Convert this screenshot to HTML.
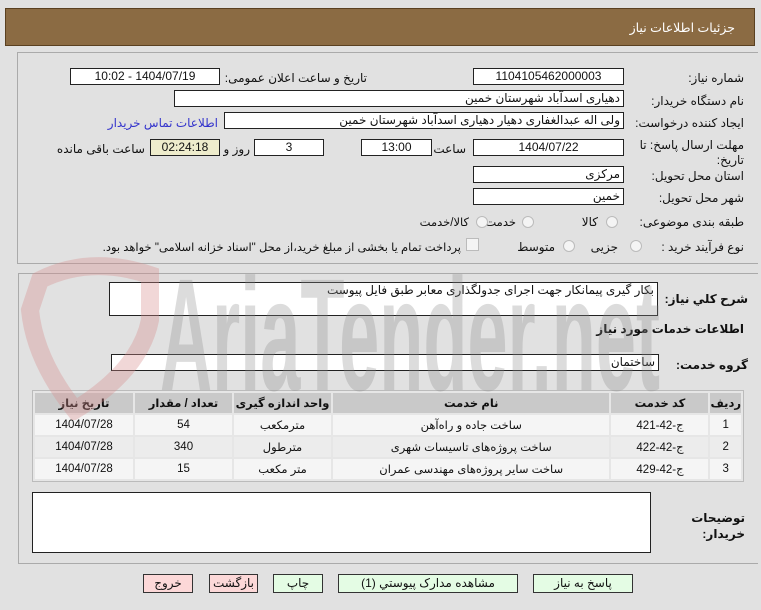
<!DOCTYPE html>
<html><head><meta charset="utf-8"><style>
body{margin:0;width:761px;height:610px;background:#e1e1e1;font-family:"Liberation Sans","DejaVu Sans",sans-serif;font-size:12px;color:#111;position:relative;overflow:hidden}
.a{position:absolute}
.in{position:absolute;background:#fff;border:1px solid #222;height:17px;box-sizing:border-box;line-height:15px;direction:rtl;padding:0 3px;white-space:nowrap;overflow:hidden}
.c{text-align:center}
.l{position:absolute;direction:rtl;white-space:nowrap}
.r{position:absolute;width:12px;height:12px;border-radius:50%;border:1px solid #bbb;background:#f4f4f4;box-sizing:border-box}
.btn{position:absolute;top:574px;height:19px;border:1px solid #333;box-sizing:border-box;text-align:center;line-height:17px;direction:rtl}
table{border-collapse:separate;border-spacing:2px;position:absolute;left:32px;top:390px;width:712px;background:#e6e6e6;border:1px solid #bbb;direction:rtl;font-size:11.5px}
td,th{text-align:center;height:20px;padding:0}
th{background:#c9c9c9;font-weight:bold}
tr.o td{background:#f5f5f5}tr.e td{background:#ececec}
</style></head><body>
<div class="a" style="left:5px;top:8px;width:750px;height:38px;background:#8b6b43;border:1px solid #5a4020;box-sizing:border-box"></div>
<div class="l" style="right:26px;top:20px;color:#fff;font-size:12.5px">جزئیات اطلاعات نیاز</div>
<div class="a" style="left:17px;top:52px;width:741px;height:212px;border:1px solid #aaa;border-right:none;box-sizing:border-box"></div>

<div class="l" style="right:17px;top:71px">شماره نیاز:</div>
<div class="in c" style="left:473px;top:68px;width:151px">1104105462000003</div>
<div class="l" style="right:394px;top:71px">تاریخ و ساعت اعلان عمومی:</div>
<div class="in c" style="left:70px;top:68px;width:150px">1404/07/19 - 10:02</div>
<div class="l" style="right:17px;top:94px">نام دستگاه خریدار:</div>
<div class="in" style="left:174px;top:90px;width:450px">دهیاری اسدآباد شهرستان خمین</div>
<div class="l" style="right:17px;top:116px">ایجاد کننده درخواست:</div>
<div class="in" style="left:224px;top:112px;width:400px">ولی اله عبدالغفاری دهیار دهیاری اسدآباد شهرستان خمین</div>
<div class="l" style="right:543px;top:116px;color:#3333cc">اطلاعات تماس خریدار</div>
<div class="l" style="right:17px;top:138px;line-height:15px;text-align:right">مهلت ارسال پاسخ: تا<br>تاریخ:</div>
<div class="in c" style="left:473px;top:139px;width:151px">1404/07/22</div>
<div class="l" style="right:295px;top:142px">ساعت</div>
<div class="in c" style="left:361px;top:139px;width:71px">13:00</div>
<div class="in c" style="left:254px;top:139px;width:70px">3</div>
<div class="l" style="right:511px;top:142px">روز و</div>
<div class="in c" style="left:150px;top:139px;width:70px;background:#eeeccc">02:24:18</div>
<div class="l" style="right:616px;top:142px">ساعت باقی مانده</div>
<div class="l" style="right:17px;top:169px">استان محل تحویل:</div>
<div class="in" style="left:473px;top:166px;width:151px">مرکزی</div>
<div class="l" style="right:17px;top:191px">شهر محل تحویل:</div>
<div class="in" style="left:473px;top:188px;width:151px">خمین</div>
<div class="l" style="right:17px;top:215px">طبقه بندی موضوعی:</div>
<div class="r" style="left:606px;top:216px"></div><div class="l" style="right:163px;top:215px">کالا</div>
<div class="r" style="left:522px;top:216px"></div><div class="l" style="right:245px;top:215px;font-size:11.5px">خدمت</div>
<div class="r" style="left:476px;top:216px"></div><div class="l" style="right:292px;top:215px;font-size:11.5px">کالا/خدمت</div>
<div class="l" style="right:17px;top:240px">نوع فرآیند خرید :</div>
<div class="r" style="left:630px;top:240px"></div><div class="l" style="right:143px;top:240px">جزیی</div>
<div class="r" style="left:563px;top:240px"></div><div class="l" style="right:206px;top:240px">متوسط</div>
<div class="a" style="left:466px;top:238px;width:11px;height:11px;border:1px solid #bbb;background:#f4f4f4"></div>
<div class="l" style="right:300px;top:240px;font-size:11.5px">پرداخت تمام یا بخشی از مبلغ خرید،از محل "اسناد خزانه اسلامی" خواهد بود.</div>

<div class="a" style="left:18px;top:273px;width:740px;height:291px;border:1px solid #aaa;border-right:none;box-sizing:border-box"></div>
<div class="l" style="right:13px;top:292px;font-weight:bold">شرح کلي نياز:</div>
<div class="in" style="left:109px;top:282px;width:549px;height:34px">بکار گیری پیمانکار جهت اجرای جدولگذاری معابر طبق فایل پیوست</div>
<div class="l" style="right:17px;top:322px;font-weight:bold">اطلاعات خدمات مورد نیاز</div>
<div class="l" style="right:13px;top:358px;font-weight:bold">گروه خدمت:</div>
<div class="in" style="left:111px;top:354px;width:548px">ساختمان</div>
<table>
<tr><th style="width:28px">ردیف</th><th style="width:97px">کد خدمت</th><th>نام خدمت</th><th style="width:97px">واحد اندازه گیری</th><th style="width:97px">تعداد / مقدار</th><th style="width:98px">تاریخ نیاز</th></tr>
<tr class="o"><td>1</td><td>ج-42-421</td><td>ساخت جاده و راه‌آهن</td><td>مترمکعب</td><td>54</td><td>1404/07/28</td></tr>
<tr class="e"><td>2</td><td>ج-42-422</td><td>ساخت پروژه‌های تاسیسات شهری</td><td>مترطول</td><td>340</td><td>1404/07/28</td></tr>
<tr class="o"><td>3</td><td>ج-42-429</td><td>ساخت سایر پروژه‌های مهندسی عمران</td><td>متر مکعب</td><td>15</td><td>1404/07/28</td></tr>
</table>
<div class="in" style="left:32px;top:492px;width:619px;height:61px"></div>
<div class="l" style="right:16px;top:510px;font-weight:bold;line-height:16px;text-align:right">توضیحات<br>خریدار:</div>
<div class="btn" style="left:143px;width:50px;background:#fcd8d8">خروج</div>
<div class="btn" style="left:209px;width:49px;background:#fcd8d8">بازگشت</div>
<div class="btn" style="left:273px;width:50px;background:#e4fce4">چاپ</div>
<div class="btn" style="left:338px;width:180px;background:#e4fce4">مشاهده مدارک پیوستي (1)</div>
<div class="btn" style="left:533px;width:100px;background:#e4fce4">پاسخ به نیاز</div>
<svg class="a" style="left:0;top:250px;pointer-events:none" width="761" height="170">
<path d="M40 30 Q90 5 150 25 L150 70 Q140 120 75 160 Q35 110 30 60 Z" fill="none" stroke="rgba(215,140,140,0.35)" stroke-width="18"/>
<text x="160" y="140" font-family="Liberation Sans" font-weight="bold" font-size="160" textLength="500" lengthAdjust="spacingAndGlyphs" fill="rgba(140,140,140,0.3)">AriaTender.net</text>
</svg>
</body></html>
